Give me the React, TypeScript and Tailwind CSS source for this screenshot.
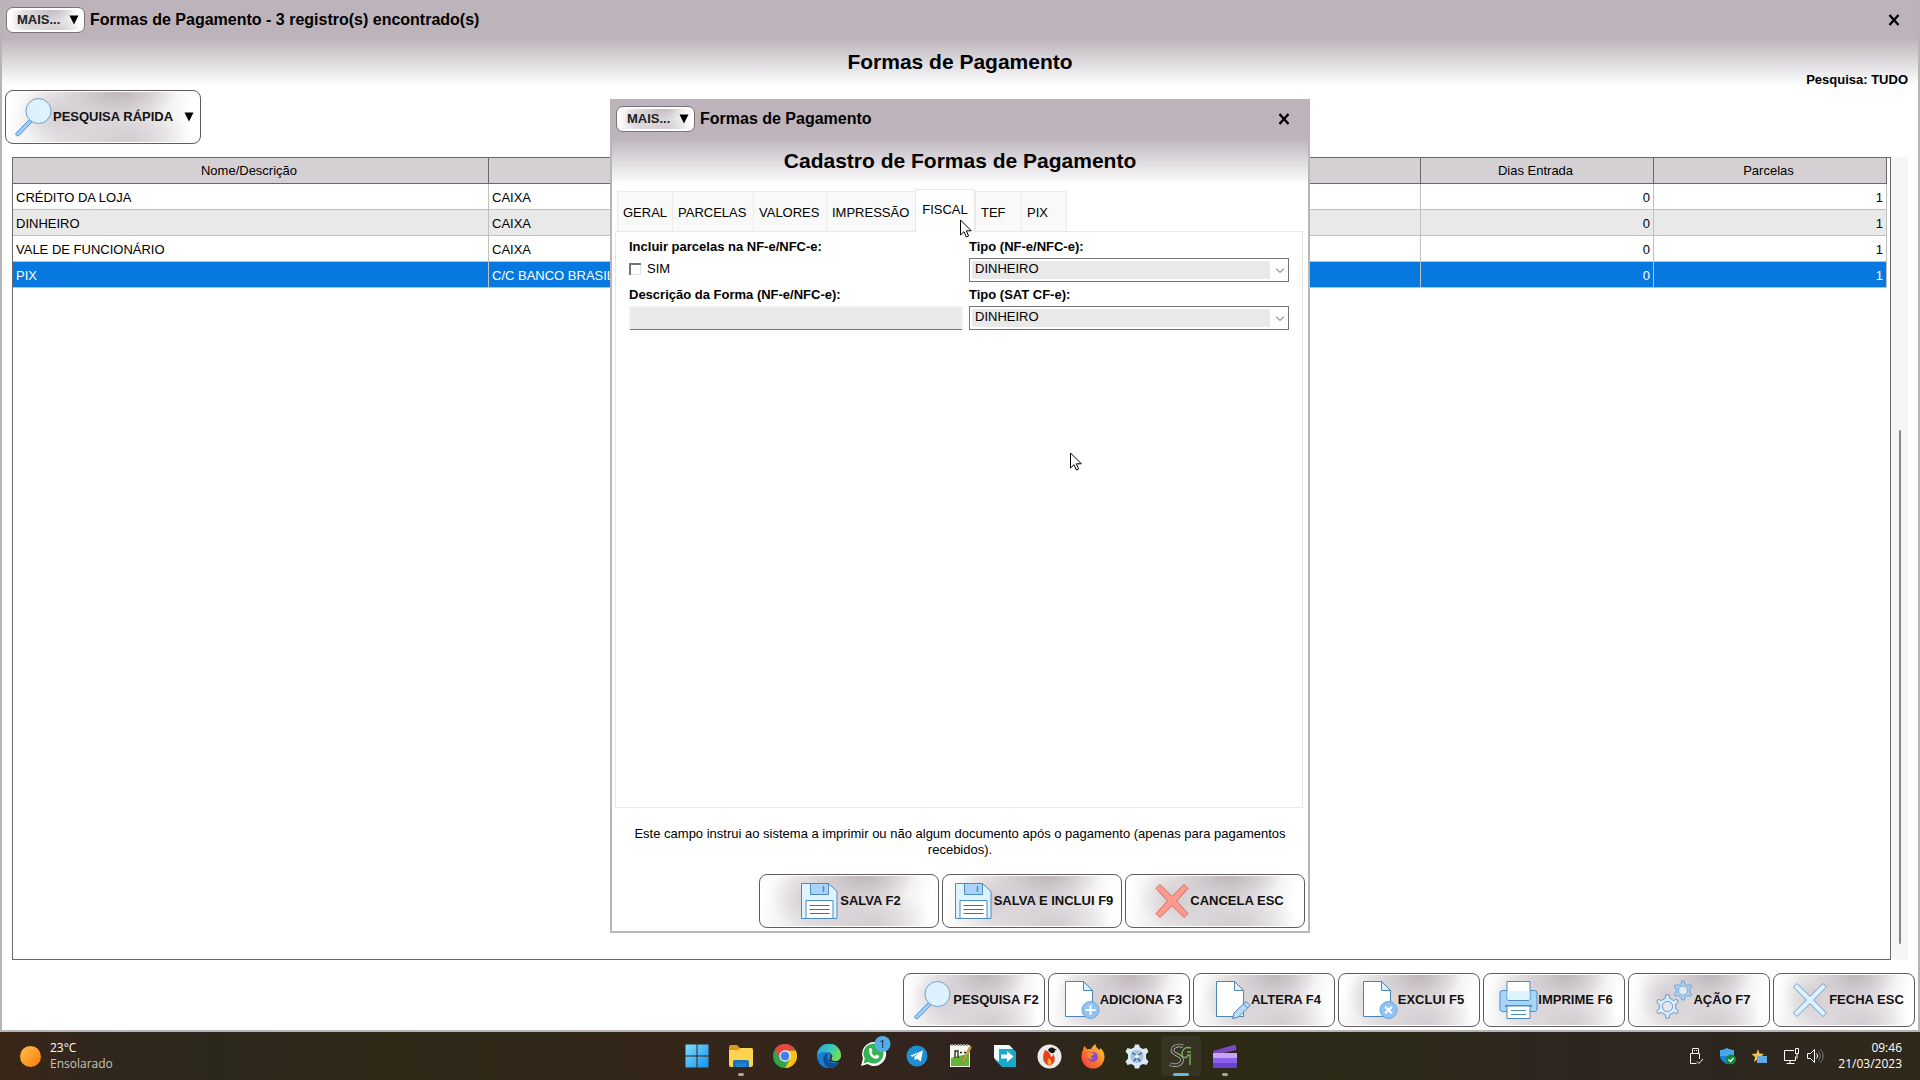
import React from "react";

const rows = [
  { nome: "CRÉDITO DA LOJA", conta: "CAIXA", dias: 0, parcelas: 1 },
  { nome: "DINHEIRO", conta: "CAIXA", dias: 0, parcelas: 1 },
  { nome: "VALE DE FUNCIONÁRIO", conta: "CAIXA", dias: 0, parcelas: 1 },
  { nome: "PIX", conta: "C/C BANCO BRASIL", dias: 0, parcelas: 1, selected: true },
];

const silver =
  "bg-[radial-gradient(ellipse_30%_60%_at_58%_0%,#bdb5ba_0%,transparent_100%),radial-gradient(ellipse_22%_60%_at_28%_45%,#d2ccd0_0%,transparent_100%),radial-gradient(ellipse_35%_70%_at_62%_95%,#d3cdd1_0%,transparent_100%),linear-gradient(100deg,#ffffff_3%,#e6e3e5_30%,#e0dcdf_50%,#ebe8ea_72%,#ffffff_93%)]";

/* ---------- button icons (38px) ---------- */

function Magnifier() {
  return (
    <svg width="38" height="40" viewBox="0 0 38 40" aria-hidden="true">
      <path d="M15.5 22.5 2 36a2 2 0 0 0 3 2.500L18 25z" fill="#9ccbf5" stroke="#5b9bd5" />
      <circle cx="24.500" cy="14" r="12.500" fill="#def1ff" stroke="#6f9fc8" />
    </svg>
  );
}

function Floppy() {
  return (
    <svg width="37" height="38" viewBox="0 0 37 38" aria-hidden="true">
      <path d="M.5 1.500h27l8.500 8v27H.5z" fill="#dff3ff" stroke="#4d8cc0" />
      <path d="M9.500 1.500h18v11h-18z" fill="#a9d3fa" stroke="#4d8cc0" />
      <path d="M22.500 4v6" stroke="#4d8cc0" strokeWidth="1.500" />
      <path d="M5 18.500h27v18H5z" fill="#fff" stroke="#4d8cc0" />
      <path d="M8.500 23.500h20M8.500 27.500h20M8.500 31.500h20" stroke="#4a6f90" />
    </svg>
  );
}

function Cross({ fill, stroke, wide }: { fill: string; stroke: string; wide?: boolean }) {
  return wide ? (
    <svg width="36" height="38" viewBox="0 0 36 38" aria-hidden="true">
      <path d="M6 2.500 18 14.500 30 2.500 34 6.500 22.500 19 34 31.500 30 35.500 18 23.500 6 35.500 2 31.500 13.500 19 2 6.500z" fill={fill} stroke={stroke} strokeLinejoin="round" />
    </svg>
  ) : (
    <svg width="36" height="38" viewBox="0 0 36 38" aria-hidden="true">
      <path d="M5 2.500 18 15.500 31 2.500 34.500 6 21.500 19 34.500 32 31 35.500 18 22.500 5 35.500 1.500 32 14.500 19 1.500 6z" fill={fill} stroke={stroke} strokeLinejoin="round" />
    </svg>
  );
}

function Page({ children }: { children: React.ReactNode }) {
  return (
    <svg width="36" height="40" viewBox="0 0 36 40" aria-hidden="true">
      <path d="M1.500 1.500h18l9 9v26h-27z" fill="#fff" stroke="#4d86b5" />
      <path d="M19.500 1.500v9h9z" fill="#dff1ff" stroke="#4d86b5" />
      {children}
    </svg>
  );
}

function PageAdd() {
  return (
    <Page>
      <circle cx="26.500" cy="30" r="8.500" fill="#8fc4f4" stroke="#69a5dc" />
      <path d="M26.500 25v10M21.500 30h10" stroke="#fff" strokeWidth="2" />
    </Page>
  );
}

function PageDelete() {
  return (
    <Page>
      <circle cx="26.500" cy="30" r="8.500" fill="#8fc4f4" stroke="#69a5dc" />
      <path d="m23.200 26.700 6.600 6.600m0-6.600-6.600 6.600" stroke="#fff" strokeWidth="2" />
    </Page>
  );
}

function PageEdit() {
  return (
    <Page>
      <path d="m17.500 38.500 1.500-5.500 12-11.500 4 4L23.500 37z" fill="#b9dcf9" stroke="#4d86b5" />
      <path d="m28.500 24 4 4" stroke="#4d86b5" />
    </Page>
  );
}

function Printer() {
  return (
    <svg width="39" height="40" viewBox="0 0 39 40" aria-hidden="true">
      <rect x="1" y="10.500" width="37" height="21" rx="2.500" fill="#a8d6fb" stroke="#4d8cc0" />
      <path d="M8 1.500h23v17a2 2 0 0 1-2 2H10a2 2 0 0 1-2-2z" fill="#fff" stroke="#4d8cc0" />
      <path d="M8.500 11h22v7.500a1.500 1.500 0 0 1-1.500 1.500H10a1.500 1.500 0 0 1-1.500-1.500z" fill="#e1f3ff" />
      <path d="M6 26h27" stroke="#4d8cc0" strokeWidth="2" />
      <path d="M8 26h23v12.500H8z" fill="#fff" stroke="#4d8cc0" />
      <path d="M12 30.500h15M12 34.500h15" stroke="#4d8cc0" />
    </svg>
  );
}

const gearPath =
  "M-2.200-9 -1.800-12.500H1.800L2.200-9 6.700-6.400 9.900-7.800 11.700-4.700 8.900-2.600V2.600L11.700 4.700 9.900 7.800 6.700 6.400 2.200 9 1.800 12.500H-1.800L-2.200 9-6.700 6.400-9.900 7.800-11.700 4.700-8.900 2.600V-2.600L-11.700-4.700-9.900-7.800-6.700-6.400z";

function Gears() {
  return (
    <svg width="38" height="40" viewBox="0 0 38 40" aria-hidden="true">
      <g transform="translate(12.500 26.500) scale(.93)">
        <path d={gearPath} fill="#d8edfd" stroke="#5b97cb" strokeLinejoin="round" />
        <circle r="5.500" fill="#e9e6e9" stroke="#5b97cb" />
      </g>
      <g transform="translate(28 10.500) scale(.76)">
        <path d={gearPath} fill="#a5d2f8" stroke="#5b97cb" strokeLinejoin="round" />
        <circle r="6" fill="#e9e6e9" stroke="#5b97cb" />
      </g>
    </svg>
  );
}

/* ---------- buttons ---------- */

function ActionButton({ icon, label, className }: { icon: React.ReactNode; label: string; className: string }) {
  return (
    <button
      type="button"
      className={`flex h-[54px] shrink-0 items-center justify-center whitespace-nowrap rounded-[8px] border border-[#5f5a5e] text-[13px] font-bold text-[#111] shadow-[inset_0_0_0_1px_#ffffff] ${silver} ${className}`}
    >
      {icon}
      <span>{label}</span>
    </button>
  );
}

function MaisButton() {
  return (
    <button
      type="button"
      className={`flex h-[26px] w-[79px] items-center justify-between rounded-[7px] border border-[#7a7478] pl-[10px] pr-[5px] text-[13px] font-bold text-[#222] shadow-[inset_0_0_0_2px_#ffffff] ${silver}`}
    >
      <span>MAIS...</span>
      <Triangle />
    </button>
  );
}

function Triangle() {
  return (
    <svg width="10" height="10" viewBox="0 0 10 10" aria-hidden="true">
      <path d="M.5.500h9L5 9.500z" fill="#000" />
    </svg>
  );
}

function CloseButton() {
  return (
    <button type="button" aria-label="Fechar" className="flex size-5 items-center justify-center">
      <svg width="12" height="12" viewBox="0 0 12 12" aria-hidden="true">
        <path d="m1.500 1 9 10m0-10-9 10" stroke="#000" strokeWidth="2.400" />
      </svg>
    </button>
  );
}

function Pointer({ className }: { className: string }) {
  return (
    <svg width="12" height="19" viewBox="0 0 12 19" aria-hidden="true" className={`pointer-events-none absolute ${className}`}>
      <path d="M.5 1v15l3.500-3.300 2.300 5.300 2.300-1-2.300-5.200h5z" fill="#fff" stroke="#000" />
    </svg>
  );
}

/* ---------- dialog ---------- */

const tabs = [
  { label: "GERAL", width: "w-[55px]" },
  { label: "PARCELAS", width: "w-[81px]" },
  { label: "VALORES", width: "w-[73px]" },
  { label: "IMPRESSÃO", width: "w-[89px]" },
  { label: "FISCAL", width: "w-[60px]", active: true },
  { label: "TEF", width: "w-[46px]" },
  { label: "PIX", width: "w-[46px]" },
];

function Dropdown({ id, label }: { id: string; label: string }) {
  return (
    <div className="flex flex-col">
      <label htmlFor={id} className="h-[22px] text-[13px] font-bold leading-[22px]">
        {label}
      </label>
      <div className="relative h-6 border border-[#77747a] bg-white p-[2px] pr-[18px]">
        <select id={id} className="block h-full w-full appearance-none bg-[#e9e9e9] pb-[2px] pl-[3px] text-[13px] leading-4 outline-none">
          <option>DINHEIRO</option>
        </select>
        <svg width="10" height="6" viewBox="0 0 10 6" className="pointer-events-none absolute right-[3px] top-[9px]" aria-hidden="true">
          <path d="m1 .5 4 4 4-4" fill="none" stroke="#555" />
        </svg>
      </div>
    </div>
  );
}

function Dialog() {
  return (
    <section
      role="dialog"
      aria-labelledby="dialog-title"
      className="relative flex min-h-[834px] w-[700px] flex-col border-2 border-t-0 border-[#b8b6b8] bg-white"
    >
      <header className="bg-[linear-gradient(#bdb3ba_0px,#bdb3ba_38px,#cfcacf_52px,#ffffff_86px)]">
        <div className="flex h-10 items-center pl-1 pr-[14px]">
          <MaisButton />
          <h2 className="ml-[5px] flex-1 text-base font-bold">Formas de Pagamento</h2>
          <CloseButton />
        </div>
        <h1 id="dialog-title" className="flex h-11 items-center justify-center text-[21px] font-bold">
          Cadastro de Formas de Pagamento
        </h1>
      </header>

      <div role="tablist" className="mt-[6px] flex items-end pl-[5px]">
        {tabs.map((t) =>
          t.active ? (
            <button key={t.label} type="button" role="tab" aria-selected="true" className={`relative -mb-px h-[43px] border border-b-0 border-[#e8e8e8] bg-white pb-[2px] text-[13px] ${t.width}`}>
              {t.label}
            </button>
          ) : (
            <button
              key={t.label}
              type="button"
              role="tab"
              aria-selected="false"
              className={`h-10 border border-b-0 border-r-0 border-[#ececec] bg-[#f9f9f9] pl-[5px] pt-[2px] text-left text-[13px] last:border-r ${t.width}`}
            >
              {t.label}
            </button>
          ),
        )}
      </div>

      <div className="ml-[3px] mr-[5px] flex-1 border border-[#e8e8e8] px-[13px] pt-1">
        <div className="grid grid-cols-[334px_320px] gap-x-[6px]">
          <fieldset className="h-12">
            <legend className="float-left h-[22px] w-full text-[13px] font-bold leading-[22px]">Incluir parcelas na NF-e/NFC-e:</legend>
            <label className="flex h-[22px] w-full items-center gap-[6px] text-[13px]">
              <input type="checkbox" className="size-3 appearance-none border-l-2 border-t-2 border-[#77747a] bg-white shadow-[inset_-1px_-1px_0_#e3e3e3]" />
              SIM
            </label>
          </fieldset>
          <div className="h-12">
            <Dropdown id="tipo-nfe" label="Tipo (NF-e/NFC-e):" />
          </div>
          <div className="flex flex-col">
            <label htmlFor="descricao" className="h-[22px] text-[13px] font-bold leading-[22px]">
              Descrição da Forma (NF-e/NFC-e):
            </label>
            <input
              id="descricao"
              type="text"
              className="h-6 border-2 border-b border-[#f2f2f2] border-b-[#77747a] bg-[#e9e9e9] px-1 text-[13px] outline-none"
            />
          </div>
          <Dropdown id="tipo-sat" label="Tipo (SAT CF-e):" />
        </div>
      </div>

      <p className="px-5 pt-[18px] text-center text-[13px] leading-4">
        Este campo instrui ao sistema a imprimir ou não algum documento após o pagamento (apenas para pagamentos recebidos).
      </p>

      <div className="flex justify-end gap-[3px] pb-[3px] pr-[3px] pt-4">
        <ActionButton className="w-[180px] gap-[2px] pl-1" icon={<Floppy />} label="SALVA F2" />
        <ActionButton className="w-[180px] gap-[2px] pl-1" icon={<Floppy />} label="SALVA E INCLUI F9" />
        <ActionButton className="w-[180px] pl-2" icon={<Cross wide fill="#ff9a8f" stroke="#d8695f" />} label="CANCELA ESC" />
      </div>

      <Pointer className="left-[348px] top-[120px]" />
      <Pointer className="left-[458px] top-[353px]" />
    </section>
  );
}

/* ---------- taskbar ---------- */

function WindowsIcon() {
  return (
    <svg width="24" height="24" viewBox="0 0 24 24">
      <defs>
        <linearGradient id="win" x1="0" y1="0" x2="1" y2="1">
          <stop stopColor="#7fdcff" />
          <stop offset="1" stopColor="#1592ee" />
        </linearGradient>
      </defs>
      <path d="M.5.500h11v11H.5zM12.500.500h11v11h-11zM.5 12.500h11v11H.5zM12.500 12.500h11v11h-11z" fill="url(#win)" />
    </svg>
  );
}
function FolderIcon() {
  return (
    <svg width="26" height="24" viewBox="0 0 26 24">
      <path d="M1 3a2 2 0 0 1 2-2h6l3 3h11a2 2 0 0 1 2 2v4H1z" fill="#d99a1c" />
      <path d="M1 6h9l3-2h10a2 2 0 0 1 2 2v15a2 2 0 0 1-2 2H3a2 2 0 0 1-2-2z" fill="#ffd24f" />
      <path d="M5 23v-5a2 2 0 0 1 2-2h12a2 2 0 0 1 2 2v5h-3v-3H8v3z" fill="#1a73bf" />
      <path d="M8 19.500h10V23H8z" fill="#2484cc" />
    </svg>
  );
}
function ChromeIcon() {
  return (
    <svg width="24" height="24" viewBox="0 0 24 24">
      <circle cx="12" cy="12" r="12" fill="#31a350" />
      <path d="M12 6.500h10.700A12 12 0 0 1 12 24l5-9z" fill="#fbc116" />
      <path d="M12 6.500h10.700A12 12 0 0 0 1.900 5.500l5.100 9z" fill="#e8453c" />
      <circle cx="12" cy="12" r="5.700" fill="#fff" />
      <circle cx="12" cy="12" r="4.500" fill="#3f7fee" />
    </svg>
  );
}
function EdgeIcon() {
  return (
    <svg width="24" height="24" viewBox="0 0 24 24">
      <defs>
        <linearGradient id="edge" x1="0" y1="0" x2="1" y2=".4">
          <stop stopColor="#2ba0e8" />
          <stop offset=".6" stopColor="#36c9b8" />
          <stop offset="1" stopColor="#6fdc5c" />
        </linearGradient>
      </defs>
      <path d="M0 12c0-3 5-6 10-5l4 4-2 6 10 2A12 12 0 0 1 0 12z" fill="#1a7fd0" />
      <path d="M0 12a12 12 0 0 1 24-1c.4 4-2.500 6-6 6-3 0-4.500-1.500-3-3.500C16.500 11 13 8 9 8c-5 0-8.500 2-9 4z" fill="url(#edge)" />
      <path d="M9 9.500C5 12 5 21 12 23.900c4 .2 8-2 10-5.500-5 2-10.500.6-11.500-3.400-.5-2 0-3.500.5-4.500z" fill="#0e4f9c" />
    </svg>
  );
}
function WhatsIcon() {
  return (
    <svg width="34" height="32" viewBox="0 0 34 32">
      <path d="m2 30 2-7.500A12 12 0 1 1 8.500 28z" fill="#fff" />
      <path d="m4.500 27.500 1.300-5A10 10 0 1 1 9.200 26z" fill="#35b254" />
      <path d="M10 13c1-1.500 2.500-1 2.800.2l.7 1.800-1.100 1.500c.8 1.700 2 2.800 3.600 3.500l1.500-1.500 2.600 1.300c.2 2-1.500 3.400-3.600 3-4-.7-7-5-6.500-9.800z" fill="#fff" />
      <circle cx="23.500" cy="8" r="8" fill="#54aee6" />
      <text x="23.500" y="12" textAnchor="middle" fontSize="11" fill="#10293c">1</text>
    </svg>
  );
}
function TelegramIcon() {
  return (
    <svg width="22" height="22" viewBox="0 0 22 22">
      <circle cx="11" cy="11" r="10.500" fill="#1e8fd0" />
      <path d="M4 10.800 17 5.500l-2.200 11-4-3-2 2-.5-3.500 5.700-4.800-7.200 4.500z" fill="#fff" />
    </svg>
  );
}
function NotepadIcon() {
  return (
    <svg width="24" height="26" viewBox="0 0 24 26">
      <path d="M1 2h20v22H1z" fill="#f6f6ee" />
      <path d="M2 15c6-2 12-3 18-4v12H2z" fill="#63b53a" />
      <path d="M2 2h18" stroke="#999" strokeDasharray="2 1" strokeWidth="2" />
      <path d="M6 15V8h3v7M11 9.500h2M15 9.500h2" stroke="#222" fill="none" strokeWidth="1.300" />
      <path d="m13 18 8-15 2 1-8 15-2.500 2z" fill="#d9a441" stroke="#7a5a20" strokeWidth=".5" />
    </svg>
  );
}
function ArrowIcon() {
  return (
    <svg width="24" height="24" viewBox="0 0 24 24">
      <path d="M2 1h14l7 7v15H9l-7-7z" fill="#19a9c9" />
      <path d="M1 1h15l4 4H6v13l-5-4z" fill="#f1fbfd" />
      <path d="M8 10.500h6V7l6.500 5.500L14 18v-3.500H8z" fill="#fff" />
    </svg>
  );
}
function FireIcon() {
  return (
    <svg width="25" height="25" viewBox="0 0 25 25">
      <circle cx="12.500" cy="12.500" r="12" fill="#ececec" />
      <path d="M8 6c-3 6-3 14 4.500 15.500C19 20 18.500 13 16 10c0 2-1 3-2 3 0-3-3-6-6-7z" fill="#e8401c" />
      <path d="M12 14c-2 3-2 6 .5 7 3-1 2.500-4-.5-7z" fill="#ffab2e" />
      <path d="M11 6c1-3 5-3.500 7-1l2 .5-2 1c0 3-4 4.500-7-.5z" fill="#161616" />
    </svg>
  );
}
function FirefoxIcon() {
  return (
    <svg width="24" height="25" viewBox="0 0 24 25">
      <defs>
        <linearGradient id="ff" x1="1" y1="0" x2="0" y2="1">
          <stop stopColor="#ffd93a" />
          <stop offset=".5" stopColor="#ff7d28" />
          <stop offset="1" stopColor="#f0334f" />
        </linearGradient>
      </defs>
      <path d="M2 6c0-2 1-3 1.500-4L6 5h4c1-2 2.500-4 4.500-5 0 3 2 4 4 6l1-2c3 3 4 6 4 9a11.500 11.500 0 0 1-23 0c0-3 .5-5 1.500-7z" fill="url(#ff)" />
      <circle cx="12" cy="13" r="5" fill="#8a4bd0" />
      <path d="M6 9c2-1 4-.5 6 0 2 .5 1 2-1 2.500-2 .5-1 3 1 2.800C10 17 6 14 6 9z" fill="#ff8d2a" />
    </svg>
  );
}
function GearIcon() {
  return (
    <svg width="24" height="25" viewBox="-12 -12.500 24 25">
      <path d="M-3-9-2-12H2L3-9 6-7.500 9.500-8.500 11.500-5 9-2V2L11.500 5 9.500 8.500 6 7.500 3 9 2 12H-2L-3 9-6 7.500-9.500 8.500-11.500 5-9 2V-2L-11.500-5-9.500-8.500-6-7.500z" fill="#dbe8f5" />
      <circle r="6.500" fill="#a9c4df" />
      <path d="M-5-4-1-1M5-4 1-1M-3.500 5 0 1l3.500 4" stroke="#44688f" strokeWidth="1.500" fill="none" />
      <circle r="2" fill="#e9f3fc" />
    </svg>
  );
}
function SgIcon() {
  return (
    <svg width="24" height="26" viewBox="0 0 24 26" fill="none">
      <path d="M14 3C7 1 2 5 4 9c2 3 9 3 9 8 0 4-6 7-12 4" stroke="#c9cdc4" strokeWidth="3.500" />
      <path d="M14 3C7 1 2 5 4 9c2 3 9 3 9 8 0 4-6 7-12 4" stroke="#2f3126" strokeWidth="2.200" />
      <path d="M22 5c-6-2-9 2-9 6s5 5 6 1h2v10M18 9h4" stroke="#6aa84f" strokeWidth="1.500" />
    </svg>
  );
}
function ClipIcon() {
  return (
    <svg width="26" height="25" viewBox="0 0 26 25">
      <path d="M1 7 22 1a1.500 1.500 0 0 1 2 1l.5 4L3 11z" fill="#7a4ac0" />
      <path d="M1 9h24v13a2 2 0 0 1-2 2H3a2 2 0 0 1-2-2z" fill="#8a63ea" />
      <path d="M1 9h24v5H1z" fill="#c9a4f6" />
      <path d="M1 19h24v3a2 2 0 0 1-2 2H3a2 2 0 0 1-2-2z" fill="#6a42cf" />
    </svg>
  );
}

const apps = [
  { name: "Iniciar", icon: <WindowsIcon /> },
  { name: "Explorador de Arquivos", icon: <FolderIcon />, mark: "dot" },
  { name: "Chrome", icon: <ChromeIcon /> },
  { name: "Edge", icon: <EdgeIcon /> },
  { name: "WhatsApp", icon: <WhatsIcon />, badge: true },
  { name: "Telegram", icon: <TelegramIcon /> },
  { name: "Notepad++", icon: <NotepadIcon /> },
  { name: "Acesso remoto", icon: <ArrowIcon /> },
  { name: "Firebird", icon: <FireIcon /> },
  { name: "Firefox", icon: <FirefoxIcon /> },
  { name: "Serviços", icon: <GearIcon /> },
  { name: "SG", icon: <SgIcon />, mark: "bar" },
  { name: "Clipchamp", icon: <ClipIcon />, mark: "dot" },
];

function Taskbar() {
  return (
    <footer className="grid h-12 grid-cols-[1fr_auto_1fr] items-center bg-[linear-gradient(90deg,#3a2618_0%,#2f271d_6%,#2c271c_11%,#2e2817_20%,#35261a_38%,#33251c_46%,#30231f_52%,#2d2917_58%,#2b2917_72%,#2f2520_82%,#2d261e_90%,#30291a_100%)] font-['Open_Sans',sans-serif] text-[12px] leading-4 text-white">
      <div className="flex items-center gap-[9px] pl-5">
        <span className="size-[21px] rounded-full bg-[linear-gradient(135deg,#ffc247,#fb7a0c)]" />
        <div>
          <div>23°C</div>
          <div className="text-[#c9c5be]">Ensolarado</div>
        </div>
      </div>
      <nav className="flex pl-[2px]">
        {apps.map((a) => (
          <button
            key={a.name}
            type="button"
            aria-label={a.name}
            className={`relative flex h-12 w-11 items-center justify-center ${a.badge ? "pb-[9px] pl-[6px]" : ""}`}
          >
            {a.mark === "bar" && <span className="absolute inset-x-[2px] inset-y-1 rounded bg-white/5" />}
            {a.icon}
            {a.mark === "dot" && <span className="absolute bottom-1 h-[3px] w-[6px] rounded-full bg-[#aaa69c]" />}
            {a.mark === "bar" && <span className="absolute bottom-1 h-[3px] w-4 rounded-full bg-[#6bb7dc]" />}
          </button>
        ))}
      </nav>
      <div className="flex items-center justify-end pr-[18px]">
        <svg width="16" height="18" viewBox="0 0 16 18" fill="none" stroke="#eee">
          <path d="M4.500 6.500v-5h6v5M2.500 6.500h9V12M2.500 6.500v10h6M6 3.500h1m1 0h1" />
          <path d="m9 14.500 2 2 4-4.500" />
        </svg>
        <svg width="18" height="18" viewBox="0 0 18 18" className="ml-[15px]">
          <path d="M8 1c2 1.500 4.500 2 7 2v6c0 3-3 6-7 8-4-2-7-5-7-8V3c2.500 0 5-.5 7-2z" fill="#1b83d6" />
          <path d="M8 1c2 1.500 4.500 2 7 2v6H1V3c2.500 0 5-.5 7-2z" fill="#49a7ea" />
          <circle cx="12" cy="12.500" r="5" fill="#12873c" />
          <path d="m9.500 12.500 2 2 3-3.500" stroke="#fff" strokeWidth="1.300" fill="none" />
        </svg>
        <svg width="17" height="16" viewBox="0 0 17 16" className="ml-[14px]">
          <path d="M7 1 8.500 5.500 13 6l-3.500 3 1 5L7 11l-4 3 1-5L.5 6 5.500 5.500z" fill="#f1c257" />
          <path d="M6 8h10v7H6z" fill="#62a9e6" />
        </svg>
        <svg width="17" height="17" viewBox="0 0 17 17" fill="none" stroke="#fff" className="ml-[15px]">
          <path d="M11 2.500H1.500v10h11v-4M7 12.500v3M3.500 15.500h8M12.500.500h3v5h-3zM14 5.500v5" />
        </svg>
        <svg width="18" height="16" viewBox="0 0 18 16" fill="none" stroke="#fff" className="ml-[6px]">
          <path d="M1.500 5.500h3l4-4v13l-4-4h-3zM10.500 5.500a3.500 3.500 0 0 1 0 5" />
          <path d="M12.500 3.500a6.500 6.500 0 0 1 0 9M14.500 1.500a9 9 0 0 1 0 13" stroke="#777" />
        </svg>
        <div className="ml-[14px] text-right">
          <div>09:46</div>
          <div>21/03/2023</div>
        </div>
      </div>
    </footer>
  );
}

/* ---------- page ---------- */

export default function App() {
  return (
    <div className="relative flex min-h-screen flex-col bg-white font-['Liberation_Sans',Arial,sans-serif] text-black">
      <main className="flex flex-1 flex-col border-x-2 border-b-2 border-[#b5b5b5] bg-[linear-gradient(#bdb3ba_0px,#bdb3ba_38px,#cfcacf_52px,#ffffff_86px)]">
        <div className="flex h-10 items-center pl-1 pr-[14px]">
          <MaisButton />
          <h2 className="ml-[5px] flex-1 text-base font-bold">Formas de Pagamento - 3 registro(s) encontrado(s)</h2>
          <CloseButton />
        </div>
        <h1 className="flex h-11 items-center justify-center text-[21px] font-bold">Formas de Pagamento</h1>
        <div className="-mt-3 h-[18px] pr-[10px] text-right text-[13px] font-bold leading-4">Pesquisa: TUDO</div>
        <div className="pl-[3px]">
          <button
            type="button"
            className={`flex h-[54px] w-[196px] items-center rounded-[8px] border border-[#5f5a5e] pl-2 pr-[6px] text-[13px] font-bold text-[#111] shadow-[inset_0_0_0_1px_#ffffff] ${silver}`}
          >
            <Magnifier />
            <span className="ml-px flex-1 text-left">PESQUISA RÁPIDA</span>
            <Triangle />
          </button>
        </div>

        <div className="mt-[13px] flex flex-1 pl-[10px] pr-[10px]">
          <div className="flex-1 border border-[#6b686b] bg-white pr-[3px]">
            <table className="w-full table-fixed border-separate border-spacing-0 text-[13px]">
              <colgroup>
                <col className="w-[476px]" />
                <col />
                <col className="w-[233px]" />
                <col className="w-[233px]" />
              </colgroup>
              <thead>
                <tr className="h-[26px] bg-[#d5d0d4]">
                  {["Nome/Descrição", "", "Dias Entrada", "Parcelas"].map((h, i) => (
                    <th key={i} scope="col" className="border-b border-r border-[#6b686b] py-0 pl-0 pr-[3px] font-normal">
                      {h}
                    </th>
                  ))}
                </tr>
              </thead>
              <tbody>
                {rows.map((r) => (
                  <tr key={r.nome} className={r.selected ? "h-[26px] bg-[#0678e0] text-white" : "h-[26px] even:bg-[#e9e9e9]"}>
                    <td className="border-b border-r border-[#c0c0c0] pb-0 pl-[3px] pt-[2px]">{r.nome}</td>
                    <td className="border-b border-r border-[#c0c0c0] pb-0 pl-[3px] pt-[2px]">{r.conta}</td>
                    <td className="border-b border-r border-[#c0c0c0] pb-0 pr-[3px] pt-[2px] text-right">{r.dias}</td>
                    <td className="border-b border-r border-[#c0c0c0] pb-0 pr-[3px] pt-[2px] text-right">{r.parcelas}</td>
                  </tr>
                ))}
              </tbody>
            </table>
          </div>
          <div className="flex w-[17px] flex-col items-center bg-[#f6f6f6] pb-4">
            <div className="flex-[273]" />
            <div className="w-[2px] flex-[513] rounded-full bg-[#868686]" />
          </div>
        </div>

        <div className="flex justify-end gap-[3px] pb-[3px] pr-[3px] pt-[13px]">
          <ActionButton className="w-[142px] gap-[2px] pl-1" icon={<Magnifier />} label="PESQUISA F2" />
          <ActionButton className="w-[142px] pl-2" icon={<PageAdd />} label="ADICIONA F3" />
          <ActionButton className="w-[142px] pl-2" icon={<PageEdit />} label="ALTERA F4" />
          <ActionButton className="w-[142px] pl-2" icon={<PageDelete />} label="EXCLUI F5" />
          <ActionButton className="w-[142px] pl-1" icon={<Printer />} label="IMPRIME F6" />
          <ActionButton className="w-[142px] pl-2" icon={<Gears />} label="AÇÃO F7" />
          <ActionButton className="w-[142px] gap-px pl-2" icon={<Cross fill="#dff2ff" stroke="#6a9cc6" />} label="FECHA ESC" />
        </div>
      </main>

      <Taskbar />

      <div className="absolute inset-x-0 top-[99px] flex justify-center">
        <Dialog />
      </div>
    </div>
  );
}
